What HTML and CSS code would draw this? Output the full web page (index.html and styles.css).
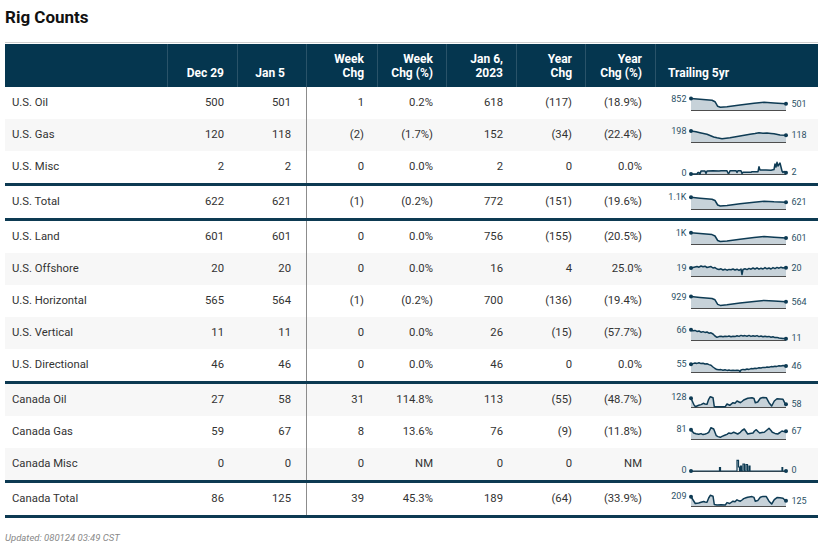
FILE: index.html
```html
<!DOCTYPE html>
<html>
<head>
<meta charset="utf-8">
<link rel="stylesheet" href="styles.css">
</head>
<body>
<h1 class="title">Rig Counts</h1>
<div class="table">
  <div class="head">
    <div class="hc"></div>
    <div class="hc">Dec 29</div>
    <div class="hc j5">Jan 5</div>
    <div class="hc">Week<br>Chg</div>
    <div class="hc">Week<br>Chg (%)</div>
    <div class="hc">Jan 6,<br>2023</div>
    <div class="hc">Year<br>Chg</div>
    <div class="hc">Year<br>Chg (%)</div>
    <div class="hc trail">Trailing 5yr</div>
  </div>

  <div class="row">
    <div class="name">U.S. Oil</div><div class="n">500</div><div class="n j5">501</div><div class="n dv">1</div><div class="n">0.2%</div><div class="n">618</div><div class="n">(117)</div><div class="n">(18.9%)</div>
    <div class="spark"><svg width="163" height="32"><g transform="translate(36,11)">
      <polygon class="area" points="0,0.5 9,1.3 21,2.3 24,3.7 26.7,8.3 29.3,9.3 36,8.7 49,7 63,5.3 73,4.3 83,5 95,5.7 95,12 0,12"/>
      <line class="base" x1="0" y1="12.5" x2="95" y2="12.5"/>
      <polyline class="ln" points="0,0.5 9,1.3 21,2.3 24,3.7 26.7,8.3 29.3,9.3 36,8.7 49,7 63,5.3 73,4.3 83,5 95,5.7"/>
      <circle class="dot" cx="0" cy="0.5" r="2"/><circle class="dot" cx="95" cy="5.7" r="2"/>
      <text class="lbl" x="-4.5" y="3.6" text-anchor="end">852</text><text class="lbl" x="100.5" y="8.8">501</text>
    </g></svg></div>
  </div>

  <div class="row alt">
    <div class="name">U.S. Gas</div><div class="n">120</div><div class="n j5">118</div><div class="n dv">(2)</div><div class="n">(1.7%)</div><div class="n">152</div><div class="n">(34)</div><div class="n">(22.4%)</div>
    <div class="spark"><svg width="163" height="32"><g transform="translate(36,11)">
      <polygon class="area" points="0,1 5,1.8 9,2.7 16,4.3 22.7,7 26,7.8 31,8.7 39,7.7 49,6 59,4.3 64,3.5 68,2.7 72,3.2 76,3 80,3.4 83,3.7 89,5 95,5.3 95,12 0,12"/>
      <line class="base" x1="0" y1="12.5" x2="95" y2="12.5"/>
      <polyline class="ln" points="0,1 5,1.8 9,2.7 16,4.3 22.7,7 26,7.8 31,8.7 39,7.7 49,6 59,4.3 64,3.5 68,2.7 72,3.2 76,3 80,3.4 83,3.7 89,5 95,5.3"/>
      <circle class="dot" cx="0" cy="1" r="2"/><circle class="dot" cx="95" cy="5.3" r="2"/>
      <text class="lbl" x="-4.5" y="4.1" text-anchor="end">198</text><text class="lbl" x="100.5" y="8.4">118</text>
    </g></svg></div>
  </div>

  <div class="row end">
    <div class="name">U.S. Misc</div><div class="n">2</div><div class="n j5">2</div><div class="n dv">0</div><div class="n">0.0%</div><div class="n">2</div><div class="n">0</div><div class="n">0.0%</div>
    <div class="spark"><svg width="163" height="32"><g transform="translate(36,11)">
      <polygon class="area" points="0,12 6,12 7,10.5 8,10.5 8.5,12 9,12 10,9 14,9 15,11.5 16,9 22,8.7 28,9 30,8.7 36,8.7 37,11.3 38,11.3 39,8.7 45,8.7 46,10.5 47,8.7 50,8.7 51,11.5 52,10.3 60,10.3 61,9.7 67,9.7 68,4.7 69,8 75,8 80,8.2 83,7.5 84,2 85,5 86,0.3 87,4 88,2.5 89,1 90,5 91,9 92,10.5 93,9.5 94,10 95,10.7 95,12 0,12"/>
      <line class="base" x1="0" y1="12.5" x2="95" y2="12.5"/>
      <polyline class="ln" points="0,12 6,12 7,10.5 8,10.5 8.5,12 9,12 10,9 14,9 15,11.5 16,9 22,8.7 28,9 30,8.7 36,8.7 37,11.3 38,11.3 39,8.7 45,8.7 46,10.5 47,8.7 50,8.7 51,11.5 52,10.3 60,10.3 61,9.7 67,9.7 68,4.7 69,8 75,8 80,8.2 83,7.5 84,2 85,5 86,0.3 87,4 88,2.5 89,1 90,5 91,9 92,10.5 93,9.5 94,10 95,10.7"/>
      <circle class="dot" cx="0" cy="12" r="2"/><circle class="dot" cx="95" cy="10.7" r="2"/>
      <text class="lbl" x="-4.5" y="13.5" text-anchor="end">0</text><text class="lbl" x="100.5" y="13.3">2</text>
    </g></svg></div>
  </div>

  <div class="row end">
    <div class="name">U.S. Total</div><div class="n">622</div><div class="n j5">621</div><div class="n dv">(1)</div><div class="n">(0.2%)</div><div class="n">772</div><div class="n">(151)</div><div class="n">(19.6%)</div>
    <div class="spark"><svg width="163" height="32"><g transform="translate(36,11)">
      <polygon class="area" points="0,0.3 9,1.2 21,2.2 24,3.5 26.7,8 29.3,9 36,8.5 49,6.8 63,5.2 73,4.2 83,4.8 95,5.2 95,12 0,12"/>
      <line class="base" x1="0" y1="12.5" x2="95" y2="12.5"/>
      <polyline class="ln" points="0,0.3 9,1.2 21,2.2 24,3.5 26.7,8 29.3,9 36,8.5 49,6.8 63,5.2 73,4.2 83,4.8 95,5.2"/>
      <circle class="dot" cx="0" cy="0.3" r="2"/><circle class="dot" cx="95" cy="5.2" r="2"/>
      <text class="lbl" x="-4.5" y="3.4" text-anchor="end">1.1K</text><text class="lbl" x="100.5" y="8.3">621</text>
    </g></svg></div>
  </div>

  <div class="row">
    <div class="name">U.S. Land</div><div class="n">601</div><div class="n j5">601</div><div class="n dv">0</div><div class="n">0.0%</div><div class="n">756</div><div class="n">(155)</div><div class="n">(20.5%)</div>
    <div class="spark"><svg width="163" height="32"><g transform="translate(36,11)">
      <polygon class="area" points="0,0.8 9,1.6 21,2.6 24,4 26.7,8.5 29.3,9.5 36,9 49,7.2 63,5.6 73,4.6 83,5.2 95,6 95,12 0,12"/>
      <line class="base" x1="0" y1="12.5" x2="95" y2="12.5"/>
      <polyline class="ln" points="0,0.8 9,1.6 21,2.6 24,4 26.7,8.5 29.3,9.5 36,9 49,7.2 63,5.6 73,4.6 83,5.2 95,6"/>
      <circle class="dot" cx="0" cy="0.8" r="2"/><circle class="dot" cx="95" cy="6" r="2"/>
      <text class="lbl" x="-4.5" y="3.9" text-anchor="end">1K</text><text class="lbl" x="100.5" y="9.1">601</text>
    </g></svg></div>
  </div>

  <div class="row alt">
    <div class="name">U.S. Offshore</div><div class="n">20</div><div class="n j5">20</div><div class="n dv">0</div><div class="n">0.0%</div><div class="n">16</div><div class="n">4</div><div class="n">25.0%</div>
    <div class="spark"><svg width="163" height="32"><g transform="translate(36,11)">
      <polygon class="area" points="0,4 2,3.5 4,3 6,2.5 8,3.2 10,2 12,2.8 14,2.2 16,3.5 18,3 20,2.6 22,4 24,3.6 26,5 28,5.5 30,4.8 32,6 34,5.2 36,6.2 38,5.4 40,5.8 42,5 44,6 46,5.2 48,6.4 50,5 51,10.5 52,5.5 54,4.8 56,5.6 58,4.4 60,5.2 62,4 64,5 66,3.8 68,5.2 70,4.2 72,5 74,3.6 76,4.8 78,4 80,5 82,3.6 84,4.6 86,3.4 88,4.2 90,3.2 92,4 94,3.5 95,3.7 95,12 0,12"/>
      <line class="base" x1="0" y1="12.5" x2="95" y2="12.5"/>
      <polyline class="ln" points="0,4 2,3.5 4,3 6,2.5 8,3.2 10,2 12,2.8 14,2.2 16,3.5 18,3 20,2.6 22,4 24,3.6 26,5 28,5.5 30,4.8 32,6 34,5.2 36,6.2 38,5.4 40,5.8 42,5 44,6 46,5.2 48,6.4 50,5 51,10.5 52,5.5 54,4.8 56,5.6 58,4.4 60,5.2 62,4 64,5 66,3.8 68,5.2 70,4.2 72,5 74,3.6 76,4.8 78,4 80,5 82,3.6 84,4.6 86,3.4 88,4.2 90,3.2 92,4 94,3.5 95,3.7"/>
      <circle class="dot" cx="0" cy="4" r="2"/><circle class="dot" cx="95" cy="3.7" r="2"/>
      <text class="lbl" x="-4.5" y="7.1" text-anchor="end">19</text><text class="lbl" x="100.5" y="6.8">20</text>
    </g></svg></div>
  </div>

  <div class="row">
    <div class="name">U.S. Horizontal</div><div class="n">565</div><div class="n j5">564</div><div class="n dv">(1)</div><div class="n">(0.2%)</div><div class="n">700</div><div class="n">(136)</div><div class="n">(19.4%)</div>
    <div class="spark"><svg width="163" height="32"><g transform="translate(36,11)">
      <polygon class="area" points="0,0.6 9,1.5 21,2.5 24,3.8 26.7,8.4 29.3,9.4 36,8.8 49,7.1 63,5.4 73,4.4 83,5 95,5.8 95,12 0,12"/>
      <line class="base" x1="0" y1="12.5" x2="95" y2="12.5"/>
      <polyline class="ln" points="0,0.6 9,1.5 21,2.5 24,3.8 26.7,8.4 29.3,9.4 36,8.8 49,7.1 63,5.4 73,4.4 83,5 95,5.8"/>
      <circle class="dot" cx="0" cy="0.6" r="2"/><circle class="dot" cx="95" cy="5.8" r="2"/>
      <text class="lbl" x="-4.5" y="3.7" text-anchor="end">929</text><text class="lbl" x="100.5" y="8.9">564</text>
    </g></svg></div>
  </div>

  <div class="row alt">
    <div class="name">U.S. Vertical</div><div class="n">11</div><div class="n j5">11</div><div class="n dv">0</div><div class="n">0.0%</div><div class="n">26</div><div class="n">(15)</div><div class="n">(57.7%)</div>
    <div class="spark"><svg width="163" height="32"><g transform="translate(36,11)">
      <polygon class="area" points="0,1.7 2,2.8 4,2.4 6,3.4 8,3 10,4.2 12,3.6 14,4.4 16,4 18,5.2 20,4.8 22,6 24,8 26,9.3 28,8.6 30,8.2 32,8.8 34,8.2 36,8.6 38,8 40,8.8 42,8.2 44,8.6 46,7.8 48,8.4 50,7.4 52,8 54,7.6 56,8.2 58,7.4 60,8.4 62,7.8 64,8.2 66,7.6 68,8.6 70,8 72,8.8 74,8.2 76,8.8 78,8.4 80,9.2 82,8.8 84,9.6 86,9.4 88,10 90,10.2 92,10.6 94,10.4 95,10.7 95,12 0,12"/>
      <line class="base" x1="0" y1="12.5" x2="95" y2="12.5"/>
      <polyline class="ln" points="0,1.7 2,2.8 4,2.4 6,3.4 8,3 10,4.2 12,3.6 14,4.4 16,4 18,5.2 20,4.8 22,6 24,8 26,9.3 28,8.6 30,8.2 32,8.8 34,8.2 36,8.6 38,8 40,8.8 42,8.2 44,8.6 46,7.8 48,8.4 50,7.4 52,8 54,7.6 56,8.2 58,7.4 60,8.4 62,7.8 64,8.2 66,7.6 68,8.6 70,8 72,8.8 74,8.2 76,8.8 78,8.4 80,9.2 82,8.8 84,9.6 86,9.4 88,10 90,10.2 92,10.6 94,10.4 95,10.7"/>
      <circle class="dot" cx="0" cy="1.7" r="2"/><circle class="dot" cx="95" cy="10.7" r="2"/>
      <text class="lbl" x="-4.5" y="4.8" text-anchor="end">66</text><text class="lbl" x="100.5" y="13.3">11</text>
    </g></svg></div>
  </div>

  <div class="row end">
    <div class="name">U.S. Directional</div><div class="n">46</div><div class="n j5">46</div><div class="n dv">0</div><div class="n">0.0%</div><div class="n">46</div><div class="n">0</div><div class="n">0.0%</div>
    <div class="spark"><svg width="163" height="32"><g transform="translate(36,11)">
      <polygon class="area" points="0,4.3 2,3.6 4,3 6,3.4 8,2.8 10,3.6 12,3.2 14,4 16,3.8 18,4.6 20,5.2 22,7 24,8.5 26,9.6 28,9.8 30,9.6 32,10.2 34,9.8 36,10.4 38,10 40,10.6 42,10.2 44,10.6 46,10.2 48,10.6 49,11.7 50,10 52,9.4 54,9.8 56,9 58,9.4 60,8.6 62,8.8 64,8.2 66,8.4 68,7.8 70,8 72,7.4 74,7.6 76,7 78,7.2 80,6.6 82,6.8 84,6.2 86,6.4 88,5.8 90,6 92,5.6 94,5.8 95,6 95,12 0,12"/>
      <line class="base" x1="0" y1="12.5" x2="95" y2="12.5"/>
      <polyline class="ln" points="0,4.3 2,3.6 4,3 6,3.4 8,2.8 10,3.6 12,3.2 14,4 16,3.8 18,4.6 20,5.2 22,7 24,8.5 26,9.6 28,9.8 30,9.6 32,10.2 34,9.8 36,10.4 38,10 40,10.6 42,10.2 44,10.6 46,10.2 48,10.6 49,11.7 50,10 52,9.4 54,9.8 56,9 58,9.4 60,8.6 62,8.8 64,8.2 66,8.4 68,7.8 70,8 72,7.4 74,7.6 76,7 78,7.2 80,6.6 82,6.8 84,6.2 86,6.4 88,5.8 90,6 92,5.6 94,5.8 95,6"/>
      <circle class="dot" cx="0" cy="4.3" r="2"/><circle class="dot" cx="95" cy="6" r="2"/>
      <text class="lbl" x="-4.5" y="7.4" text-anchor="end">55</text><text class="lbl" x="100.5" y="9.1">46</text>
    </g></svg></div>
  </div>

  <div class="row alt">
    <div class="name">Canada Oil</div><div class="n">27</div><div class="n j5">58</div><div class="n dv">31</div><div class="n">114.8%</div><div class="n">113</div><div class="n">(55)</div><div class="n">(48.7%)</div>
    <div class="spark"><svg width="163" height="32"><g transform="translate(36,11)">
      <polygon class="area" points="0,3.3 2.7,9.3 4.3,11.7 7.7,10.3 10,9.6 12.7,8.3 14,9 16,9.3 17.7,4.3 19.3,1.7 22,2.7 23.3,11.7 34.3,11.7 36,9 38.7,10.3 42,7.7 44,8.2 46,6 48,7 49.3,7.7 51,6.5 52.7,5 55,4 56.7,3.3 61,2.7 63,3.5 64.3,7.7 66.7,7 69.3,3.3 72,2.5 75.3,2.7 78,7.7 80.7,11 83.3,6 86,3.7 89,4 92,4.3 94,8.3 95,9.3 95,12 0,12"/>
      <line class="base" x1="0" y1="12.5" x2="95" y2="12.5"/>
      <polyline class="ln" points="0,3.3 2.7,9.3 4.3,11.7 7.7,10.3 10,9.6 12.7,8.3 14,9 16,9.3 17.7,4.3 19.3,1.7 22,2.7 23.3,11.7 34.3,11.7 36,9 38.7,10.3 42,7.7 44,8.2 46,6 48,7 49.3,7.7 51,6.5 52.7,5 55,4 56.7,3.3 61,2.7 63,3.5 64.3,7.7 66.7,7 69.3,3.3 72,2.5 75.3,2.7 78,7.7 80.7,11 83.3,6 86,3.7 89,4 92,4.3 94,8.3 95,9.3"/>
      <circle class="dot" cx="0" cy="3.3" r="2"/><circle class="dot" cx="95" cy="9.3" r="2"/>
      <text class="lbl" x="-4.5" y="4.6" text-anchor="end">128</text><text class="lbl" x="100.5" y="11.6">58</text>
    </g></svg></div>
  </div>

  <div class="row">
    <div class="name">Canada Gas</div><div class="n">59</div><div class="n j5">67</div><div class="n dv">8</div><div class="n">13.6%</div><div class="n">76</div><div class="n">(9)</div><div class="n">(11.8%)</div>
    <div class="spark"><svg width="163" height="32"><g transform="translate(36,11)">
      <polygon class="area" points="0,2.7 2.7,6 5,6.8 7.7,7.3 10,6.6 12,7.6 14.3,7 16,6.4 17.7,5.3 20,0.7 22.7,2 25.3,8.7 27,9.6 29.3,10.3 31,9.4 34.3,8 36,7.4 37.7,6 40,6.6 42.7,5.3 45,6.2 46.7,7 49.3,5.3 51,3.5 53.3,2 55,4.5 56.7,7 59,6.4 62,6 63.5,4 65.3,2.7 67,4.5 68.7,6 71,5.6 73.3,5.3 76,3 78,1.3 80,3.5 81.3,5.3 84,6.4 86.7,7 89,5.5 91,4 93,4.6 95,4.3 95,12 0,12"/>
      <line class="base" x1="0" y1="12.5" x2="95" y2="12.5"/>
      <polyline class="ln" points="0,2.7 2.7,6 5,6.8 7.7,7.3 10,6.6 12,7.6 14.3,7 16,6.4 17.7,5.3 20,0.7 22.7,2 25.3,8.7 27,9.6 29.3,10.3 31,9.4 34.3,8 36,7.4 37.7,6 40,6.6 42.7,5.3 45,6.2 46.7,7 49.3,5.3 51,3.5 53.3,2 55,4.5 56.7,7 59,6.4 62,6 63.5,4 65.3,2.7 67,4.5 68.7,6 71,5.6 73.3,5.3 76,3 78,1.3 80,3.5 81.3,5.3 84,6.4 86.7,7 89,5.5 91,4 93,4.6 95,4.3"/>
      <circle class="dot" cx="0" cy="2.7" r="2"/><circle class="dot" cx="95" cy="4.3" r="2"/>
      <text class="lbl" x="-4.5" y="4.8" text-anchor="end">81</text><text class="lbl" x="100.5" y="7.4">67</text>
    </g></svg></div>
  </div>

  <div class="row alt end">
    <div class="name">Canada Misc</div><div class="n">0</div><div class="n j5">0</div><div class="n dv">0</div><div class="n">NM</div><div class="n">0</div><div class="n">0</div><div class="n">NM</div>
    <div class="spark"><svg width="163" height="32"><g transform="translate(36,11)">
      <line class="base" x1="0" y1="12.5" x2="95" y2="12.5"/>
      <polyline class="ln thin" points="0,12 28.5,12 28.5,8.5 29.5,8.5 29.5,12 46,12 46,1.3 47.5,1.3 47.5,8 48.5,8 48.5,12 49.5,12 49.5,7 50.5,7 50.5,12 52,12 52,5 53.5,5 53.5,12 55,12 55,5.5 56.5,5.5 56.5,12 58,12 58,7 59,7 59,12 91,12 91,8.7 91.7,8.7 91.7,12 95,12"/>
      <circle class="dot" cx="0" cy="12" r="2"/><circle class="dot" cx="95" cy="12" r="2"/>
      <text class="lbl" x="-4.5" y="14.2" text-anchor="end">0</text><text class="lbl" x="100.5" y="14.2">0</text>
    </g></svg></div>
  </div>

  <div class="row end">
    <div class="name">Canada Total</div><div class="n">86</div><div class="n j5">125</div><div class="n dv">39</div><div class="n">45.3%</div><div class="n">189</div><div class="n">(64)</div><div class="n">(33.9%)</div>
    <div class="spark"><svg width="163" height="32"><g transform="translate(36,11)">
      <polygon class="area" points="0,2.7 2.7,7 4.3,9.5 7.7,9 10,8.3 12.7,7.5 14,8 16,8.3 17.7,4 19.3,1.3 22,2.2 23.3,10.5 26,11 30,10.8 34.3,11 36,8.6 38.7,9.5 42,7.2 44,7.8 46,5.8 48,6.8 49.3,7.2 51,6 52.7,4.6 55,3.8 56.7,3.2 61,2.6 63,3.4 64.3,7.2 66.7,6.6 69.3,3.2 72,2.4 75.3,2.6 78,7.2 80.7,10 83.3,5.6 86,3.6 89,3.8 92,4.2 94,6.2 95,6.7 95,12 0,12"/>
      <line class="base" x1="0" y1="12.5" x2="95" y2="12.5"/>
      <polyline class="ln" points="0,2.7 2.7,7 4.3,9.5 7.7,9 10,8.3 12.7,7.5 14,8 16,8.3 17.7,4 19.3,1.3 22,2.2 23.3,10.5 26,11 30,10.8 34.3,11 36,8.6 38.7,9.5 42,7.2 44,7.8 46,5.8 48,6.8 49.3,7.2 51,6 52.7,4.6 55,3.8 56.7,3.2 61,2.6 63,3.4 64.3,7.2 66.7,6.6 69.3,3.2 72,2.4 75.3,2.6 78,7.2 80.7,10 83.3,5.6 86,3.6 89,3.8 92,4.2 94,6.2 95,6.7"/>
      <circle class="dot" cx="0" cy="2.7" r="2"/><circle class="dot" cx="95" cy="6.7" r="2"/>
      <text class="lbl" x="-4.5" y="4.8" text-anchor="end">209</text><text class="lbl" x="100.5" y="9.8">125</text>
    </g></svg></div>
  </div>
</div>
<p class="updated">Updated: 080124 03:49 CST</p>
</body>
</html>
```

FILE: styles.css
```css
* { box-sizing: content-box; }
body {
  margin: 0;
  padding: 0 5px;
  background: #fff;
  font-family: Roboto, "Liberation Sans", sans-serif;
  color: #333;
}
.title {
  margin: 0;
  padding-top: 7px;
  height: 20px;
  line-height: 20px;
  font-size: 17px;
  font-weight: 700;
  color: #111;
  margin-bottom: 15px;
}
.table {
  width: 813px;
  border-top: 1px solid #cfcfcf;
  padding-top: 1px;
}
.head, .row {
  display: grid;
  grid-template-columns: 162px 70px 69px 71px 69px 70px 69px 70px 163px;
}
.head {
  background: #05364f;
  height: 43px;
}
.hc {
  display: flex;
  flex-direction: column;
  justify-content: flex-end;
  align-items: flex-end;
  text-align: right;
  padding: 0 13px 7px 0;
  font-size: 12px;
  line-height: 14px;
  font-weight: 700;
  color: #fff;
}
.hc + .hc { border-left: 1px solid #2a5369; }
.hc.j5 { padding-right: 21px; }
.hc.trail {
  align-items: flex-start;
  text-align: left;
  padding: 0 0 7px 12px;
}
.row {
  height: 32px;
  background: #fff;
}
.row.alt { background: #f7f7f7; }
.row.end { border-bottom: 3px solid #0d3a52; }
.name, .n {
  font-size: 11.3px;
  line-height: 32px;
  white-space: nowrap;
}
.name { padding-left: 7px; }
.n {
  text-align: right;
  padding-right: 13px;
}
.n.j5 { padding-right: 15px; }
.n.dv { border-left: 1px solid #8c8c8c; }
.spark svg { display: block; overflow: visible; }
.area { fill: #c7d2d9; stroke: none; }
.base { stroke: #4d4d4d; stroke-width: 1; }
.ln { fill: none; stroke: #0e3b54; stroke-width: 1.5; stroke-linejoin: round; }
.ln.thin { stroke-width: 1.2; stroke-linejoin: miter; }
.dot { fill: #0e3b54; }
.lbl {
  font-family: Roboto, "Liberation Sans", sans-serif;
  font-size: 9px;
  fill: #2b5166;
}
.updated {
  margin: 14px 0 0;
  font-size: 9.5px;
  line-height: 12px;
  font-style: italic;
  color: #888;
}
```
